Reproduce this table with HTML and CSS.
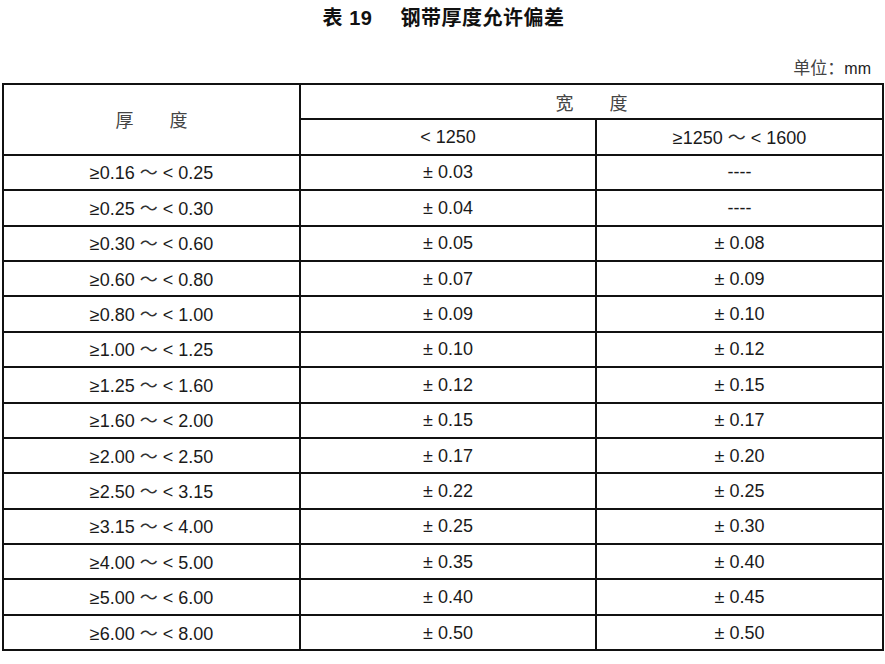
FILE: index.html
```html
<!DOCTYPE html>
<html lang="zh-CN">
<head>
<meta charset="utf-8">
<title>表 19 钢带厚度允许偏差</title>
<link rel="stylesheet" href="styles.css">
</head>
<body>
<div class="page">
  <h1 class="title">表 19<span class="gap"></span>钢带厚度允许偏差</h1>
  <div class="unit"><span class="cjk">单位：</span>mm</div>
  <table class="spec">
    <colgroup>
      <col class="c1"><col class="c2"><col class="c3">
    </colgroup>
    <thead>
      <tr>
        <th rowspan="2" class="cjk">厚　　度</th>
        <th colspan="2" class="cjk">宽　　度</th>
      </tr>
      <tr>
        <th>&lt; 1250</th>
        <th>≥1250 <span class="tl">～</span> &lt; 1600</th>
      </tr>
    </thead>
    <tbody>
      <tr><td>≥0.16 <span class="tl">～</span> &lt; 0.25</td><td>± 0.03</td><td>----</td></tr>
      <tr><td>≥0.25 <span class="tl">～</span> &lt; 0.30</td><td>± 0.04</td><td>----</td></tr>
      <tr><td>≥0.30 <span class="tl">～</span> &lt; 0.60</td><td>± 0.05</td><td>± 0.08</td></tr>
      <tr><td>≥0.60 <span class="tl">～</span> &lt; 0.80</td><td>± 0.07</td><td>± 0.09</td></tr>
      <tr><td>≥0.80 <span class="tl">～</span> &lt; 1.00</td><td>± 0.09</td><td>± 0.10</td></tr>
      <tr><td>≥1.00 <span class="tl">～</span> &lt; 1.25</td><td>± 0.10</td><td>± 0.12</td></tr>
      <tr><td>≥1.25 <span class="tl">～</span> &lt; 1.60</td><td>± 0.12</td><td>± 0.15</td></tr>
      <tr><td>≥1.60 <span class="tl">～</span> &lt; 2.00</td><td>± 0.15</td><td>± 0.17</td></tr>
      <tr><td>≥2.00 <span class="tl">～</span> &lt; 2.50</td><td>± 0.17</td><td>± 0.20</td></tr>
      <tr><td>≥2.50 <span class="tl">～</span> &lt; 3.15</td><td>± 0.22</td><td>± 0.25</td></tr>
      <tr><td>≥3.15 <span class="tl">～</span> &lt; 4.00</td><td>± 0.25</td><td>± 0.30</td></tr>
      <tr><td>≥4.00 <span class="tl">～</span> &lt; 5.00</td><td>± 0.35</td><td>± 0.40</td></tr>
      <tr><td>≥5.00 <span class="tl">～</span> &lt; 6.00</td><td>± 0.40</td><td>± 0.45</td></tr>
      <tr><td>≥6.00 <span class="tl">～</span> &lt; 8.00</td><td>± 0.50</td><td>± 0.50</td></tr>
    </tbody>
  </table>
</div>
</body>
</html>
```

FILE: styles.css
```css
html, body {
  margin: 0;
  padding: 0;
  background: #ffffff;
}

body {
  font-family: "Liberation Sans", Arial, "Noto Sans CJK SC", sans-serif;
  color: #1a1a1a;
}

.page {
  width: 885px;
  padding: 0 0 0 2px;
  box-sizing: border-box;
}

.title {
  margin: 0;
  text-align: center;
  font-family: "Liberation Sans", "Noto Sans CJK SC", sans-serif;
  font-weight: bold;
  font-size: 20px;
  line-height: 36px;
  letter-spacing: 0.5px;
  color: #111;
}

.title .gap {
  display: inline-block;
  width: 28px;
}

.unit {
  margin-top: 21px;
  margin-bottom: 4px;
  padding-right: 14px;
  text-align: right;
  font-size: 16px;
  line-height: 20px;
  color: #222;
}

.unit .cjk {
  font-size: 17px;
  color: #444;
}

.cjk {
  font-family: "Noto Sans CJK SC", sans-serif;
  font-weight: normal;
}

.spec {
  border-collapse: collapse;
  width: 880px;
  table-layout: fixed;
  border: 2px solid #111;
}

.spec col.c1 { width: 297px; }
.spec col.c2 { width: 296px; }
.spec col.c3 { width: 287px; }

.spec th,
.spec td {
  border: 2px solid #111;
  height: 33.4px;
  padding: 0;
  text-align: center;
  vertical-align: middle;
  font-size: 18px;
  font-weight: normal;
  line-height: 20px;
  color: #1a1a1a;
}

.spec th.cjk {
  font-size: 18px;
  color: #444;
}

.tl {
  font-family: "Noto Sans CJK SC", sans-serif;
  color: #333;
}
```
